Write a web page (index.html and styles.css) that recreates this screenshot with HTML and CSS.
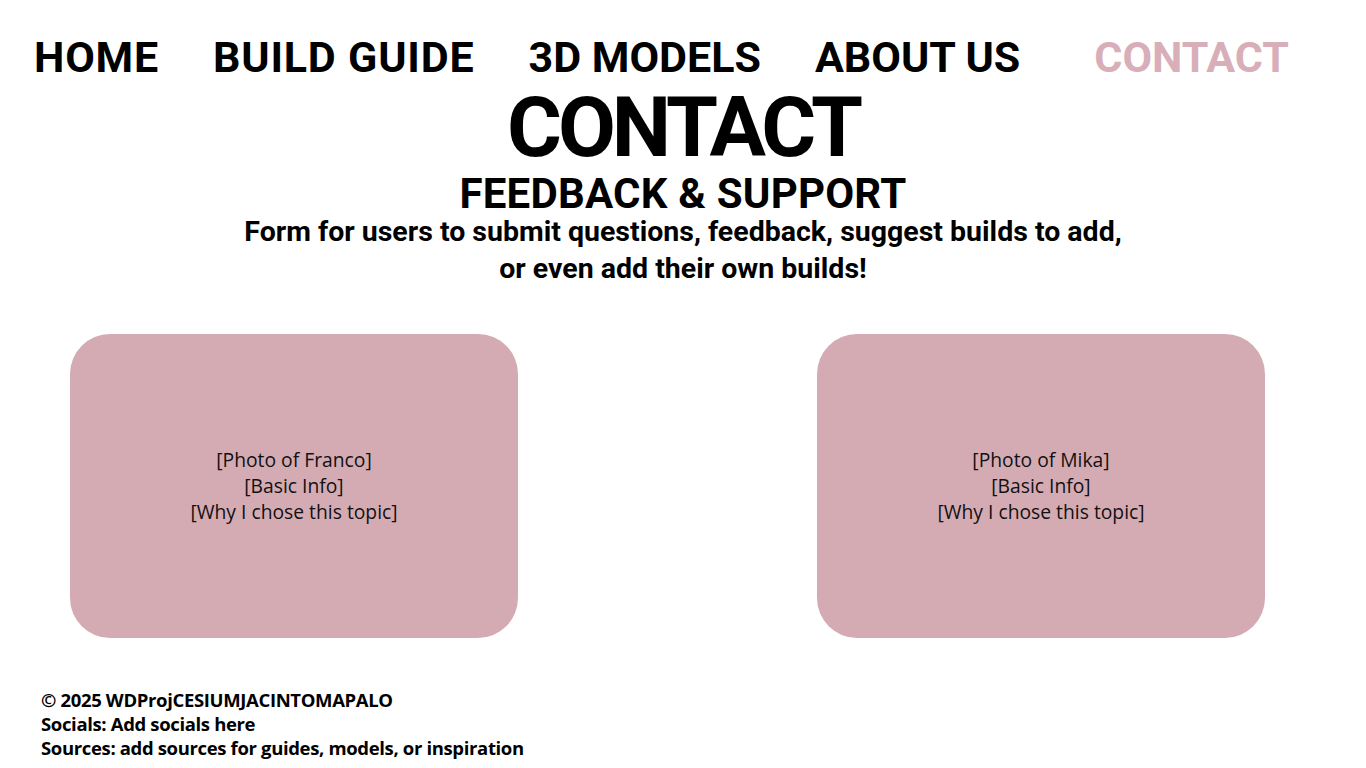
FILE: index.html
```html
<!DOCTYPE html>
<html lang="en">
<head>
<meta charset="utf-8">
<title>Contact</title>
<link rel="stylesheet" href="styles.css">
</head>
<body>
<nav class="nav">
  <a class="nav-link nav-wide" href="#">HOME</a>
  <a class="nav-link nav-wide" href="#">BUILD GUIDE</a>
  <a class="nav-link" href="#">3D MODELS</a>
  <a class="nav-link" href="#">ABOUT US</a>
  <a class="nav-link nav-active" href="#">CONTACT</a>
</nav>
<header class="hero">
  <h1 class="title">CONTACT</h1>
  <h2 class="subtitle">FEEDBACK &amp; SUPPORT</h2>
  <p class="lead">Form for users to submit questions, feedback, suggest builds to add,<br>or even add their own builds!</p>
</header>
<main class="cards">
  <section class="card">
    <p>[Photo of Franco]<br>[Basic Info]<br>[Why I chose this topic]</p>
  </section>
  <section class="card">
    <p>[Photo of Mika]<br>[Basic Info]<br>[Why I chose this topic]</p>
  </section>
</main>
<footer class="footer">
  <p>© 2025 WDProjCESIUMJACINTOMAPALO</p>
  <p>Socials: Add socials here</p>
  <p>Sources: add sources for guides, models, or inspiration</p>
</footer>
</body>
</html>
```
FILE: styles.css
```css
html, body {
  margin: 0;
  padding: 0;
  background: #ffffff;
  color: #000000;
}
body {
  width: 1366px;
  height: 768px;
  overflow: hidden;
  font-family: Roboto, "Liberation Sans", sans-serif;
}
.nav {
  display: flex;
  align-items: baseline;
  gap: 54px;
  padding: 36px 0 0 34px;
}
.nav-link {
  font-family: Roboto, sans-serif;
  font-weight: 700;
  font-size: 43px;
  line-height: 1;
  color: #000;
  text-decoration: none;
}
.nav-wide {
  letter-spacing: 0.8px;
}
.nav-active {
  color: #d8afb8;
  margin-left: 20px;
}
.hero {
  text-align: center;
  margin-top: 11px;
}
.title {
  margin: 0;
  font-size: 84px;
  line-height: 0.9;
  font-weight: 700;
  letter-spacing: -4px;
}
.subtitle {
  margin: 7px 0 0;
  font-size: 42px;
  line-height: 1;
  font-weight: 700;
  letter-spacing: 0.2px;
}
.lead {
  margin: -2px 0 0;
  font-size: 28.5px;
  line-height: 37px;
  font-weight: 700;
}
.cards {
  display: flex;
  justify-content: space-between;
  padding: 0 101px 0 70px;
  margin-top: 47px;
}
.card {
  width: 448px;
  height: 304px;
  background: #d5abb3;
  border-radius: 40px;
  display: flex;
  align-items: center;
  justify-content: center;
  text-align: center;
}
.card p {
  margin: 0;
  font-family: "Open Sans", sans-serif;
  font-size: 19.3px;
  line-height: 26px;
  color: #111;
}
.footer {
  margin-top: 50px;
  padding-left: 41px;
}
.footer p {
  margin: 0;
  font-family: "Open Sans", sans-serif;
  font-weight: 700;
  font-size: 18.5px;
  line-height: 24px;
  letter-spacing: -0.35px;
}
```
